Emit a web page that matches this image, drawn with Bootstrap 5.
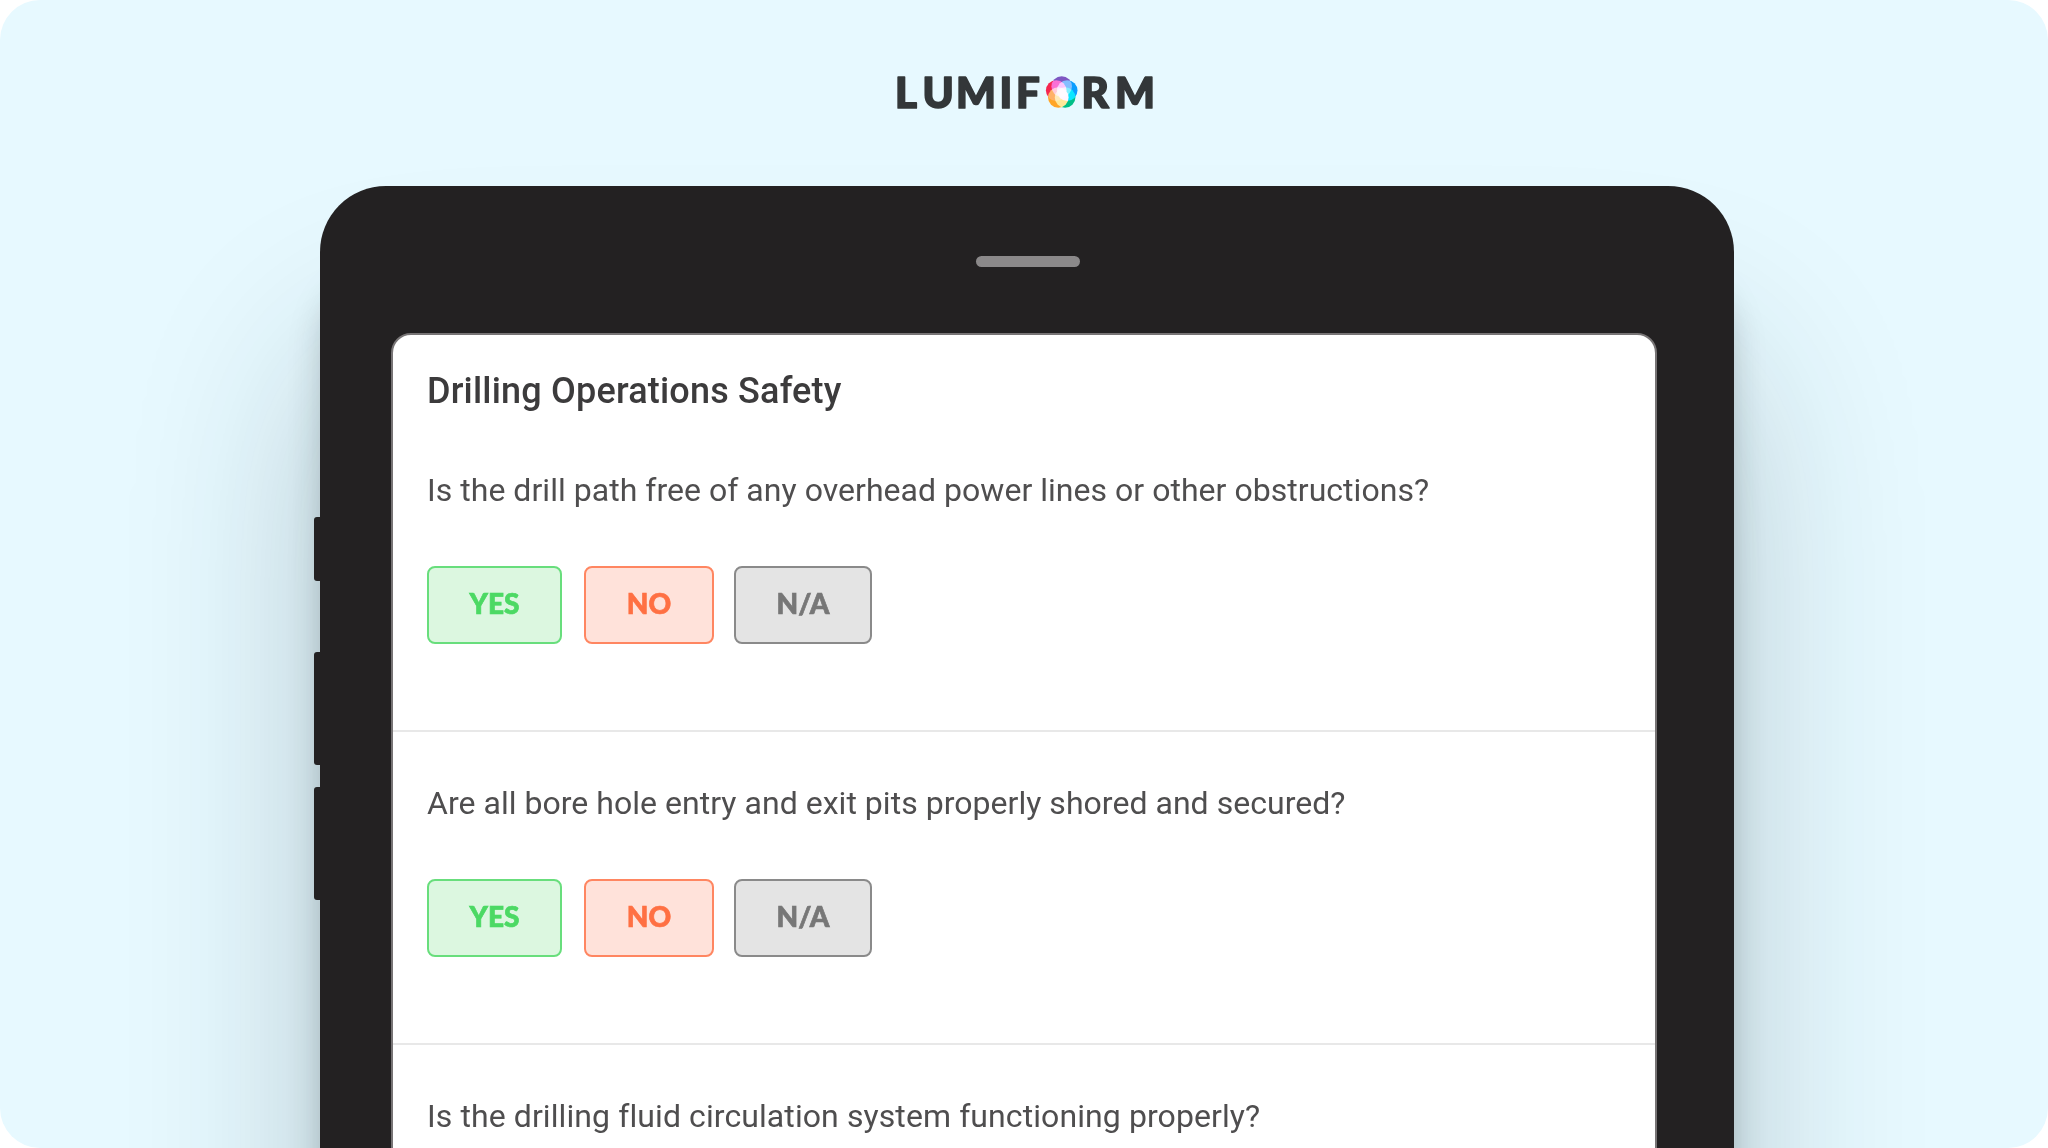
<!DOCTYPE html>
<html lang="en">
<head>
    <meta charset="UTF-8">
    <meta name="viewport" content="width=device-width, initial-scale=1">
    <title>Lumiform - Drilling Operations Safety</title>
    <link href="https://cdn.jsdelivr.net/npm/bootstrap@5.3.0/dist/css/bootstrap.min.css" rel="stylesheet">

    <style>
        body {
            background-color: #fff;
            font-family: Roboto, "Liberation Sans", sans-serif;
        }
        .stage {
            height: 1148px;
            padding-top: 66px;
            background-color: #e7f9ff;
            border-radius: 40px;
        }
        .brand-logo {
            width: 270px;
            height: 52px;
            margin-left: 890px;
        }
        .brand-logo text {
            font-family: Lato, sans-serif;
            font-weight: 900;
            font-size: 42px;
            fill: #333739;
            stroke: #333739;
            stroke-width: 1.7;
            stroke-linejoin: round;
        }
        .petals {
            isolation: isolate;
        }
        .petals circle {
            mix-blend-mode: screen;
        }
        .tablet {
            width: 1414px;
            height: 1500px;
            margin: 68px 0 0 320px;
            padding: 70px 77px 0 71px;
            background-color: #232122;
            border-radius: 66px;
            box-shadow: 0 170px 190px rgba(20, 40, 50, .24), 0 90px 36px -6px rgba(20, 40, 40, .28);
        }
        .speaker {
            width: 104px;
            height: 11px;
            margin-left: 585px;
            background-color: #8b898a;
        }
        /* hardware keys on the left edge */
        .side-key {
            left: -6px;
            width: 8px;
            background-color: #232122;
            border-radius: 3px 0 0 3px;
        }
        .key-mute { top: 331px; height: 64px; }
        .key-up { top: 466px; height: 113px; }
        .key-down { top: 601px; height: 113px; }

        .screen {
            height: 1300px;
            margin-top: 66px;
            background-color: #fff;
            border: 2px solid #777475;
            border-radius: 20px;
        }
        .form-title {
            padding: 36px 0 0 34px;
            margin-bottom: 0;
            height: 84px;
            font-size: 36px;
            font-weight: 500;
            line-height: 40px;
            letter-spacing: .19px;
            color: #3c3b3c;
            white-space: nowrap;
        }
        .question {
            height: 313px;
            padding: 51px 34px 0;
            border-bottom: 2px solid #e8e8e8;
        }
        .question p {
            height: 40px;
            margin-bottom: 56px;
            font-size: 32px;
            line-height: 40px;
            letter-spacing: .03px;
            color: #4f4e4f;
            white-space: nowrap;
        }
        .question:last-child p {
            letter-spacing: .09px;
        }
        .answer {
            height: 78px;
            padding: 0 0 4px;
            border: 2px solid;
            border-radius: 8px;
            font-family: Lato, sans-serif;
            font-size: 28px;
            font-weight: 900;
            -webkit-text-stroke: .7px currentColor;
        }
        .answer-yes { width: 135px; margin-right: 22px; color: #4cd964; background-color: #dcf7e0; border-color: #68de7c; }
        .answer-no { width: 130px; margin-right: 20px; color: #ff7043; background-color: #ffe2da; border-color: #ff8661; }
        .answer-na { width: 138px; color: #777; background-color: #e4e4e4; border-color: #8a8a8a; }
    </style>
</head>
<body>

<div class="stage overflow-hidden">
    <svg class="brand-logo d-block" viewBox="890 66 270 52">
        <text y="107.8" x="895 922.5 956 999.5 1016">LUMIF</text>
        <text y="107.8" x="1081.5 1115">RM</text>
        <g class="petals">
            <circle cx="1061.7" cy="86.6" r="10.3" fill="#7e57c2"/>
            <circle cx="1067.2" cy="90.6" r="10.3" fill="#0a9dff"/>
            <circle cx="1065.1" cy="97.5" r="10.3" fill="#00bf87"/>
            <circle cx="1058.3" cy="97.5" r="10.3" fill="#ffa526"/>
            <circle cx="1056.2" cy="90.6" r="10.3" fill="#f5264f"/>
        </g>
    </svg>

    <div class="tablet position-relative">
        <div class="side-key key-mute position-absolute"></div>
        <div class="side-key key-up position-absolute"></div>
        <div class="side-key key-down position-absolute"></div>
        <div class="speaker rounded-pill"></div>

        <div class="screen overflow-hidden">
            <h1 class="form-title">Drilling Operations Safety</h1>

            <div class="question">
                <p>Is the drill path free of any overhead power lines or other obstructions?</p>
                <div class="d-flex">
                    <button type="button" class="btn answer answer-yes">YES</button>
                    <button type="button" class="btn answer answer-no">NO</button>
                    <button type="button" class="btn answer answer-na">N/A</button>
                </div>
            </div>

            <div class="question">
                <p>Are all bore hole entry and exit pits properly shored and secured?</p>
                <div class="d-flex">
                    <button type="button" class="btn answer answer-yes">YES</button>
                    <button type="button" class="btn answer answer-no">NO</button>
                    <button type="button" class="btn answer answer-na">N/A</button>
                </div>
            </div>

            <div class="question">
                <p>Is the drilling fluid circulation system functioning properly?</p>
            </div>
        </div>
    </div>
</div>

<script src="https://cdn.jsdelivr.net/npm/bootstrap@5.3.0/dist/js/bootstrap.bundle.min.js"></script>

</body>
</html>
